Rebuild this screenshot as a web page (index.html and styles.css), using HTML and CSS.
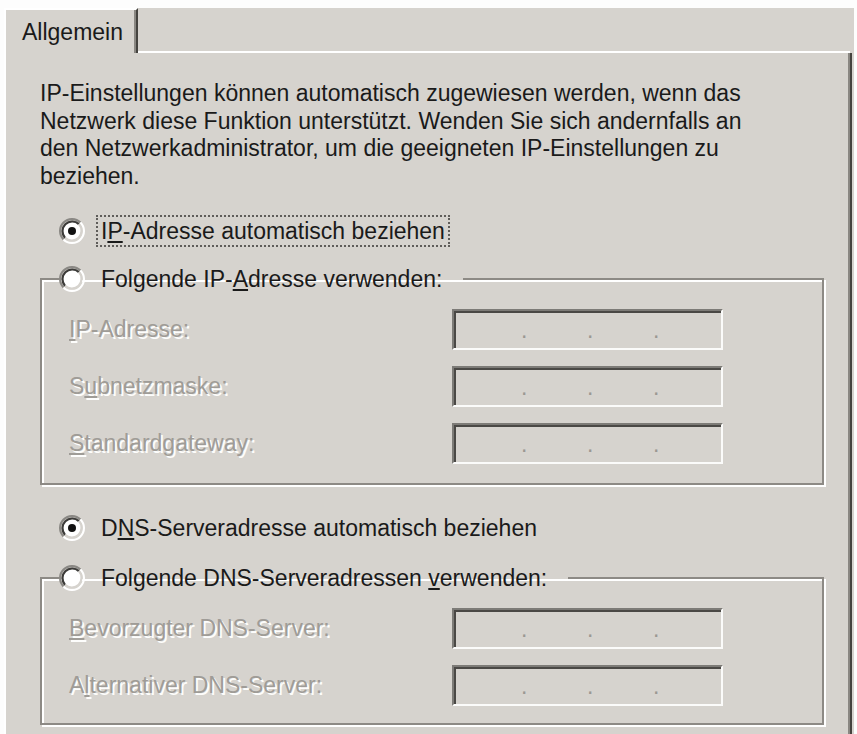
FILE: index.html
```html
<!DOCTYPE html>
<html lang="de">
<head>
    <meta charset="UTF-8">
    <title>Eigenschaften von Internetprotokoll (TCP/IP)</title>
    <link rel="stylesheet" href="styles.css">
</head>
<body>
    <svg class="defs" width="0" height="0" aria-hidden="true">
        <defs>
            <!-- classic sunken radio, drawn on a 12px grid -->
            <symbol id="radio" viewBox="0 0 12 12">
                <circle cx="6" cy="6" r="4.6" fill="#fff"/>
                <path d="M2.11 9.89 A5.5 5.5 0 0 1 9.89 2.11" fill="none" stroke="#8a8884" stroke-width="1"/>
                <path d="M9.89 2.11 A5.5 5.5 0 0 1 2.11 9.89" fill="none" stroke="#fff" stroke-width="1"/>
                <path d="M2.82 9.18 A4.5 4.5 0 0 1 9.18 2.82" fill="none" stroke="#3c3b39" stroke-width="1"/>
                <path d="M9.18 2.82 A4.5 4.5 0 0 1 2.82 9.18" fill="none" stroke="#d6d3ce" stroke-width="1"/>
            </symbol>
        </defs>
    </svg>

    <div class="dialog">
        <div class="tabs">
            <div class="tab">Allgemein</div>
            <div class="tab-rest"></div>
        </div>

        <div class="panel">
            <p class="intro">IP-Einstellungen können automatisch zugewiesen werden, wenn das Netzwerk diese Funktion unterstützt. Wenden Sie sich andernfalls an den Netzwerkadministrator, um die geeigneten IP-Einstellungen zu beziehen.</p>

            <div class="option checked">
                <svg class="radio"><use href="#radio"/><circle cx="13" cy="13" r="4" fill="#111"/></svg>
                <span class="caption focus">I<u>P</u>-Adresse automatisch beziehen</span>
            </div>

            <fieldset class="group">
                <legend>
                    <div class="option">
                        <svg class="radio"><use href="#radio"/></svg>
                        <span class="caption">Folgende IP-<u>A</u>dresse verwenden:</span>
                    </div>
                </legend>
                <div class="fields">
                    <span class="label"><u>I</u>P-Adresse:</span>
                    <div class="ip-box"><span class="dot">.</span><span class="dot">.</span><span class="dot">.</span></div>
                    <span class="label">S<u>u</u>bnetzmaske:</span>
                    <div class="ip-box"><span class="dot">.</span><span class="dot">.</span><span class="dot">.</span></div>
                    <span class="label"><u>S</u>tandardgateway:</span>
                    <div class="ip-box"><span class="dot">.</span><span class="dot">.</span><span class="dot">.</span></div>
                </div>
            </fieldset>

            <div class="option checked dns">
                <svg class="radio"><use href="#radio"/><circle cx="13" cy="13" r="4" fill="#111"/></svg>
                <span class="caption">D<u>N</u>S-Serveradresse automatisch beziehen</span>
            </div>

            <fieldset class="group dns-group">
                <legend>
                    <div class="option">
                        <svg class="radio"><use href="#radio"/></svg>
                        <span class="caption">Folgende DNS-Serveradressen <u>v</u>erwenden:</span>
                    </div>
                </legend>
                <div class="fields">
                    <span class="label"><u>B</u>evorzugter DNS-Server:</span>
                    <div class="ip-box"><span class="dot">.</span><span class="dot">.</span><span class="dot">.</span></div>
                    <span class="label">A<u>l</u>ternativer DNS-Server:</span>
                    <div class="ip-box"><span class="dot">.</span><span class="dot">.</span><span class="dot">.</span></div>
                </div>
            </fieldset>
        </div>
    </div>
</body>
</html>
```

FILE: styles.css
```css
body {
    margin: 0;
    background: #fdfdfd;
    font-family: "Liberation Sans", Arial, sans-serif;
    font-size: 23px;
    color: #1a1a1a;
    overflow: hidden;
}

.defs {
    position: absolute;
}

.dialog {
    margin: 8px 3px 0 4px;
    height: 726px;
    background: #d6d3ce;
    display: flex;
    flex-direction: column;
}

/* tab strip */

.tabs {
    display: flex;
    height: 45px;
}

.tab {
    padding: 9px 13px 0 16px;
    border-top: 2px solid #fff;
    border-left: 2px solid #fff;
    border-right: 2px solid #45433f;
    box-shadow: inset -2px 0 0 #8a8782;
    line-height: 27px;
}

.tab-rest {
    flex: 1;
    border-bottom: 2px solid #fff;
    margin-right: 4px;
}

/* page body */

.panel {
    flex: 1;
    border-left: 2px solid #fff;
    border-right: 2px solid #45433f;
    box-shadow: inset -2px 0 0 #8a8782;
    margin-right: 2px;
    padding: 27px 26px 0 34px;
}

.intro {
    margin: 0;
    max-width: 735px;
    line-height: 27.5px;
}

.option {
    display: flex;
    align-items: center;
    height: 34px;
    margin-left: 19px;
}

.option.checked {
    margin-top: 24px;
}

.option.dns {
    margin-top: 26px;
}

.radio {
    width: 26px;
    height: 26px;
    flex: none;
}

.caption {
    margin-left: 11px;
    padding: 0 3px;
    border: 2px solid transparent;
    line-height: 28px;
}

.caption.focus {
    border: 2px dotted #5f5d5a;
}

/* etched group boxes */

.group {
    margin: 14px 0 0;
    padding: 13px 0 19px 0;
    border: 2px solid #8d8a85;
    box-shadow: 2px 2px 0 #fff, inset 2px 2px 0 #fff;
    min-width: 0;
}

.group legend {
    margin-left: 17px;
    padding: 0 16px 0 0;
}

.group legend .option {
    margin-left: 0;
}

.dns-group {
    margin-top: 16px;
    padding-bottom: 17px;
}

.fields {
    display: grid;
    grid-template-columns: 383px 271px;
    row-gap: 16px;
    align-items: center;
    margin-left: 27px;
}

.label {
    color: #9f9c97;
    text-shadow: 2px 2px 0 #fdfdfc;
}

.ip-box {
    height: 41px;
    box-sizing: border-box;
    border: 2px solid;
    border-color: #7d7b77 #fbfbfa #fbfbfa #7d7b77;
    box-shadow: inset 2px 2px 0 #4a4845;
    display: flex;
    align-items: flex-start;
    gap: 60px;
    padding: 8px 0 0 67px;
}

.dot {
    width: 6px;
    text-align: center;
    line-height: 23px;
    color: #9b9893;
}
```
